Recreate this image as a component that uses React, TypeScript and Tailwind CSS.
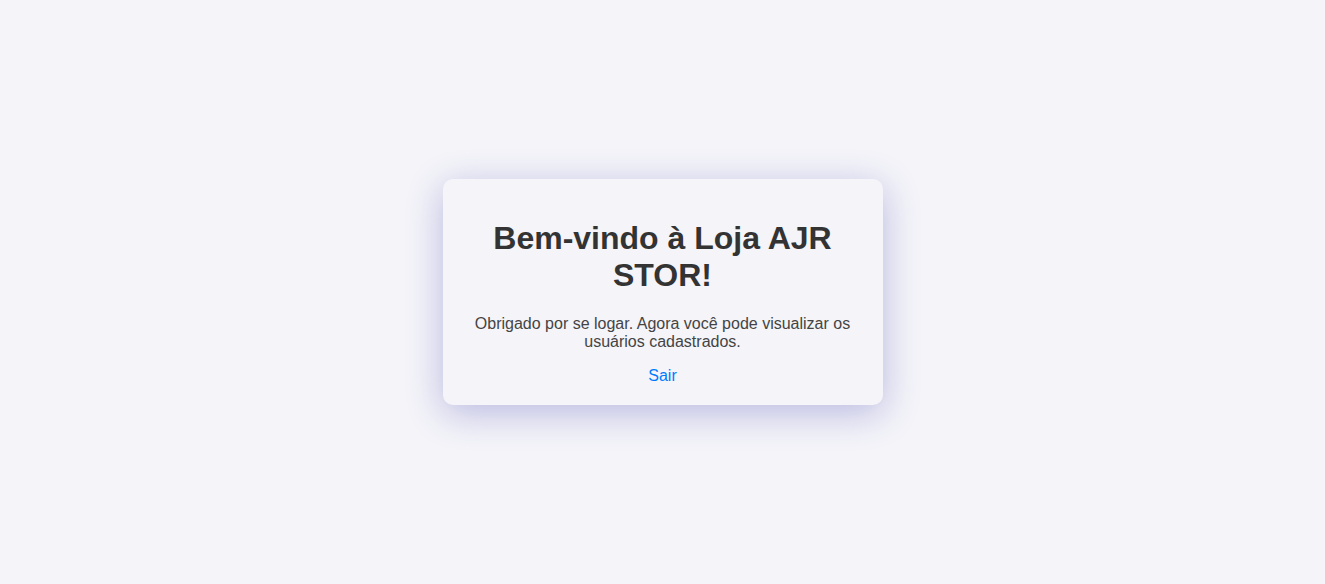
export default function App() {
  return (
    <div className="min-h-screen w-full bg-[#f4f4f9] flex items-center justify-center font-['Liberation_Sans',Arial,sans-serif]">
      <div className="w-[440px] p-5 rounded-[10px] bg-[#f4f4f9] text-center shadow-[0_8px_36px_rgba(50,50,170,0.3)]">
        <h1 className="my-[21.44px] text-[32px] leading-[normal] font-bold text-[#333]">Bem-vindo à Loja AJR STOR!</h1>
        <p className="text-base leading-[normal] text-[#444]">
          Obrigado por se logar. Agora você pode visualizar os usuários cadastrados.
        </p>
        <p className="mt-4 text-base leading-[normal]">
          <a href="#" className="text-[#007bff]">Sair</a>
        </p>
      </div>
    </div>
  );
}
